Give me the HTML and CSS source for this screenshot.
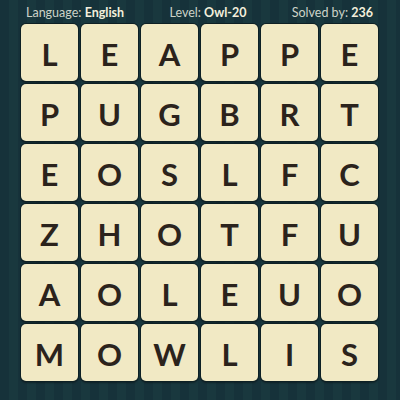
FILE: index.html
```html
<!DOCTYPE html>
<html>
<head>
<meta charset="utf-8">
<link rel="stylesheet" href="styles.css">
</head>
<body>
<div class="page">
  <div class="header">
    <span class="item">Language: <b>English</b></span>
    <span class="item">Level: <b>Owl-20</b></span>
    <span class="item">Solved by: <b>236</b></span>
  </div>
  <div class="grid">
    <div class="tile">L</div><div class="tile">E</div><div class="tile">A</div><div class="tile">P</div><div class="tile">P</div><div class="tile">E</div>
    <div class="tile">P</div><div class="tile">U</div><div class="tile">G</div><div class="tile">B</div><div class="tile">R</div><div class="tile">T</div>
    <div class="tile">E</div><div class="tile">O</div><div class="tile">S</div><div class="tile">L</div><div class="tile">F</div><div class="tile">C</div>
    <div class="tile">Z</div><div class="tile">H</div><div class="tile">O</div><div class="tile">T</div><div class="tile">F</div><div class="tile">U</div>
    <div class="tile">A</div><div class="tile">O</div><div class="tile">L</div><div class="tile">E</div><div class="tile">U</div><div class="tile">O</div>
    <div class="tile">M</div><div class="tile">O</div><div class="tile">W</div><div class="tile">L</div><div class="tile">I</div><div class="tile">S</div>
  </div>
</div>
</body>
</html>
```
FILE: styles.css
```css
html, body {
  margin: 0;
  padding: 0;
}
body {
  width: 400px;
  height: 400px;
  overflow: hidden;
  background-color: #17343a;
  background-image: repeating-linear-gradient(90deg, #16323a 0px, #16323a 9px, #19383e 9px, #19383e 18px);
  font-family: Lato, "Open Sans", sans-serif;
}
.page {
  display: flex;
  flex-direction: column;
  padding: 0 22px 0 21px;
}
.header {
  height: 24px;
  display: flex;
  justify-content: space-between;
  align-items: center;
  padding: 0 5px 0 5px;
  font-size: 12.5px;
  color: #cdd3c8;
}
.header b {
  color: #f3efdc;
  font-weight: 700;
}
.grid {
  display: grid;
  grid-template-columns: repeat(6, 57px);
  grid-auto-rows: 57px;
  gap: 3px;
}
.tile {
  background: #f1e9c4;
  border-radius: 5px;
  box-shadow: 0 0 0 1px #0e2024, 0 2px 2px rgba(0,0,0,0.35);
  display: flex;
  align-items: center;
  justify-content: center;
  font-size: 31px;
  font-weight: 700;
  color: #2b231c;
  padding-top: 2px;
  box-sizing: border-box;
}
```
